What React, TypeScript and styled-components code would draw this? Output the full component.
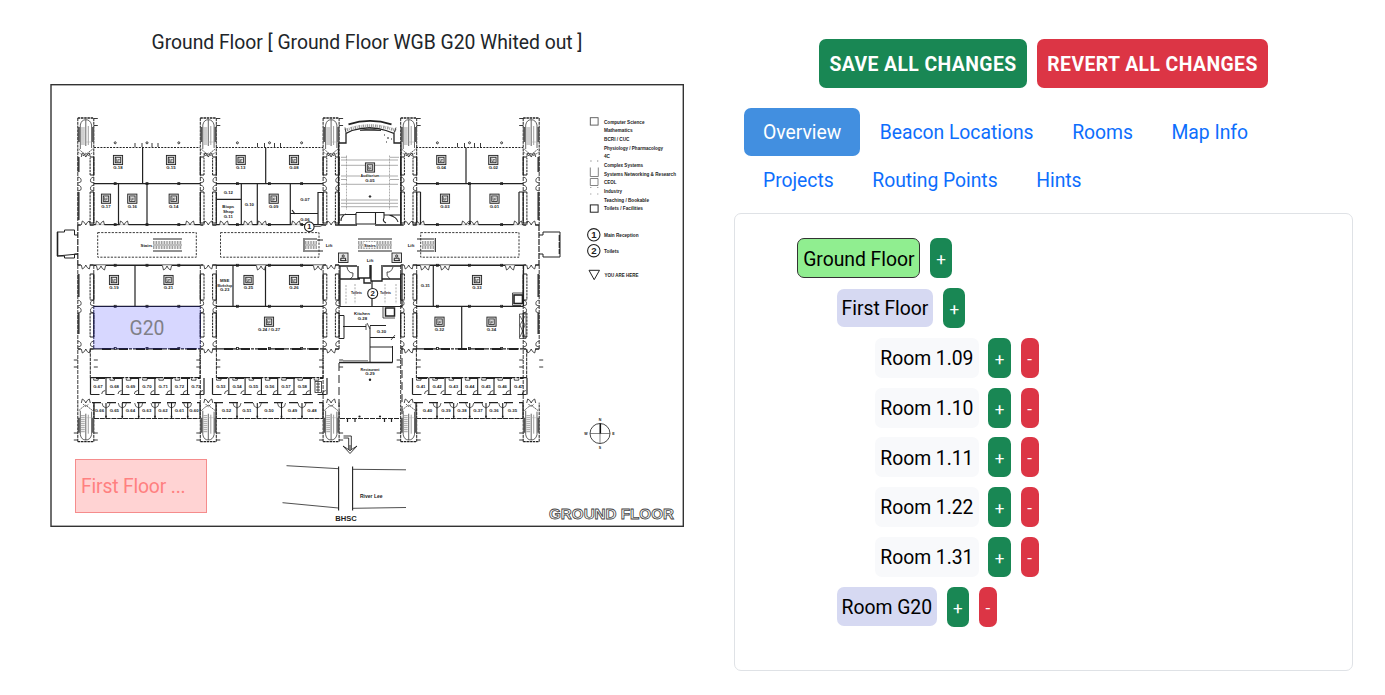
import React, { useState } from 'react';
import styled, { createGlobalStyle, css } from 'styled-components';

const GlobalStyle = createGlobalStyle`
  * { box-sizing: border-box; }
  body {
    margin: 0;
    background: #fff;
    color: #212529;
    font-family: Roboto, "Liberation Sans", sans-serif;
    font-size: 19.35px;
    line-height: 29px;
    letter-spacing: -0.032px;
  }
  button { letter-spacing: inherit; }
`;

const Page = styled.div`
  display: grid;
  grid-template-columns: 734px 619px;
  height: 695px;
  overflow: hidden;
`;

const MapColumn = styled.section`
  display: flex;
  flex-direction: column;
  align-items: center;
  padding-top: 28px;
`;

const MapTitle = styled.h1`
  margin: 0 0 27px;
  font-size: inherit;
  font-weight: 400;
  line-height: 29px;
`;

const MapFrame = styled.div`
  position: relative;
  width: 634px;
  height: 443px;
`;

const Plan = styled.svg`
  display: block;
  width: 634px;
  height: 443px;
  letter-spacing: 0;
`;

const Zone = styled.div<{ $kind: 'room' | 'floor' }>`
  position: absolute;
  display: flex;
  align-items: center;
  ${(p) =>
    p.$kind === 'room'
      ? css`
          left: 43px;
          top: 222px;
          width: 108px;
          height: 43px;
          padding-top: 2px;
          justify-content: center;
          background: rgba(0, 0, 255, 0.155);
          color: #808088;
        `
      : css`
          left: 25px;
          top: 375px;
          width: 132px;
          height: 54px;
          padding-left: 5px;
          background: #ffd3d3;
          border: 1px solid #f58c8c;
          color: #ff8080;
          letter-spacing: -0.18px;
        `}
`;

const SidePanel = styled.aside`
  display: flex;
  flex-direction: column;
  padding-top: 38.5px;
`;

const Actions = styled.div`
  display: flex;
  justify-content: center;
  gap: 10px;
`;

const ActionButton = styled.button<{ $tone: string; $width: number }>`
  width: ${(p) => p.$width}px;
  height: 49.5px;
  padding: 2px 0 0;
  border: 0;
  border-radius: 7px;
  background: ${(p) => p.$tone};
  color: #fff;
  font: 700 19.35px/29px Roboto, sans-serif;
  letter-spacing: 0.43px;
  white-space: nowrap;
`;

const Tabs = styled.nav`
  display: flex;
  flex-wrap: wrap;
  margin: 19.5px 0 0 9.7px;
`;

const Tab = styled.button<{ $active: boolean }>`
  height: 48.4px;
  padding: 1.5px 19.3px 0;
  border: 0;
  border-radius: 7px;
  background: ${(p) => (p.$active ? '#428fe0' : 'transparent')};
  color: ${(p) => (p.$active ? '#fff' : '#0d6efd')};
  font: 400 19.35px/29px Roboto, sans-serif;
`;

const TreeCard = styled.div`
  display: flex;
  flex-direction: column;
  gap: 9.75px;
  height: 458px;
  margin-top: 8.5px;
  padding: 24.5px 0 0 62.4px;
  border: 1px solid #dfe2e6;
  border-radius: 7px;
`;

const TreeRow = styled.div<{ $depth: number }>`
  display: flex;
  align-items: center;
  gap: 9.7px;
  height: 40px;
  padding-left: ${(p) => p.$depth * 38.8}px;
`;

const nodeLook = {
  root: css`
    height: 40px;
    padding: 1.5px 4.8px 0;
    border: 1px solid #333;
    background: #90ee90;
  `,
  group: css`
    height: 38.7px;
    padding: 1.5px 5px 0;
    margin-left: 0.4px;
    background: #d6d9f2;
  `,
  leaf: css`
    height: 40px;
    padding: 1.5px 5.3px 0;
    background: #f8f9fb;
  `,
};

const Node = styled.button<{ $look: keyof typeof nodeLook }>`
  border: 0;
  border-radius: 7px;
  color: #000;
  font: 400 19.35px/29px Roboto, sans-serif;
  white-space: nowrap;
  ${(p) => nodeLook[p.$look]}
`;

const SmallButton = styled.button<{ $remove?: boolean }>`
  width: ${(p) => (p.$remove ? 18 : 22.4)}px;
  height: 40px;
  padding: 2px 0 0;
  border: 0;
  border-radius: 7px;
  background: ${(p) => (p.$remove ? '#dc3545' : '#198754')};
  color: #fff;
  font: 400 17px/26px Roboto, sans-serif;
`;

const SMALL = { fontFamily: '"Liberation Sans", sans-serif', fontWeight: 700, fill: '#222', stroke: 'none' };

type LabelProps = { x: number; y: number; children: string; size?: number; anchor?: 'start' | 'middle'; len?: number };
const Label = ({ x, y, children, size = 4.3, anchor = 'middle', len }: LabelProps) => (
  <text
    {...SMALL}
    x={x}
    y={y}
    fontSize={size}
    textAnchor={anchor}
    textLength={len}
    lengthAdjust="spacingAndGlyphs"
  >
    {children}
  </text>
);

/** Projector-style room marker with the room number under it. */
const Marker = ({ x, y, label, dy = 9.4 }: { x: number; y: number; label?: string; dy?: number }) => (
  <g>
    <rect x={x - 4.6} y={y - 4.6} width={9.2} height={9.2} fill="#d5d5d5" stroke="#222" strokeWidth={0.9} />
    <rect x={x - 2.7} y={y - 2.7} width={5.4} height={5.4} fill="#eee" stroke="#222" strokeWidth={0.8} />
    <path d={`M${x - 1.5} ${y - 1.5}v3h1.3v-2h2M${x} ${y + 1}h1.5`} fill="none" stroke="#333" strokeWidth={0.6} />
    {label && <Label x={x} y={y + dy}>{label}</Label>}
  </g>
);

/** Pair of swinging doors in a horizontal wall; flip -1 opens upward. */
const Doors = ({ x, y, flip = 1 }: { x: number; y: number; flip?: number }) => (
  <g transform={`translate(${x} ${y}) scale(1 ${flip})`} stroke="#222" strokeWidth={0.8} fill="none">
    <path d="M-4.5 0H4.5" stroke="#fff" strokeWidth={1.6} />
    <path d="M-4.5 0L-3.5 4Q-1 3 0 0Q1 3 3.5 4L4.5 0" />
  </g>
);

const Tower = ({ x, y, flip = 1 }: { x: number; y: number; flip?: number }) => (
  <g transform={`translate(${x} ${y}) scale(1 ${flip})`} fill="none" stroke="#222">
    <path d="M0 0H16" strokeWidth={1.3} strokeDasharray="2.5 0.7" />
    <path d="M0 0V39M16 0V39" strokeWidth={1} strokeDasharray="3 0.8" />
    <path d="M1 9V24M15.3 9V24" strokeWidth={2} stroke="#555" />
    <path d="M2.5 31V7Q3.5 1.7 8 1.7T13.8 7V30M8 1.7V28" strokeWidth={0.7} />
    <path d="M1 31Q5 35 8 36.5L15 31M5 38L8 35L11 38" strokeWidth={0.7} strokeDasharray="2 0.6" />
    <path d="M3.2 10H7M3.2 12H7M3.2 14H7M3.2 16H7M3.2 18H7M3.2 20H7M3.2 22H7M3.2 24H7M3.2 26H7" strokeWidth={0.8} stroke="#888" />
    <path d="M10.5 8V27" strokeWidth={0.8} stroke="#888" />
    <path d="M8 24H14" stroke="#aaa" strokeWidth={0.5} />
  </g>
);

const boxes: [number, number][] = [[157, 18], [192, 31], [274, 26], [313, 24]];

const Wing = ({ x, outer }: { x: number; outer?: 'left' | 'right' }) => (
  <g fill="none" stroke="#222">
    <Tower x={x} y={118} />
    <Tower x={x} y={441.7} flip={-1} />
    {boxes.map(([y, h]) => (
      <g key={y}>
        {outer === 'left' ? (
          <path d={`M${x + 0.8} ${y}v${h - 3}`} strokeWidth={2} stroke="#444" />
        ) : (
          <g>
            <path d={`M${x} ${y}h3.7M${x} ${y + h}h3.7`} strokeWidth={1} />
            <path d={`M${x + 3.7} ${y}v${h}`} strokeWidth={1} strokeDasharray="2.4 0.8" />
            <path d={`M${x} ${y}v${h}`} strokeWidth={1.3} />
          </g>
        )}
        {outer === 'right' ? (
          <path d={`M${x + 15.2} ${y}v${h - 3}`} strokeWidth={2} stroke="#444" />
        ) : (
          <g>
            <path d={`M${x + 12.3} ${y}h3.7M${x + 12.3} ${y + h}h3.7`} strokeWidth={1} />
            <path d={`M${x + 12.3} ${y}v${h}`} strokeWidth={1} strokeDasharray="2.4 0.8" />
            <path d={`M${x + 16} ${y}v${h}`} strokeWidth={1.3} />
          </g>
        )}
      </g>
    ))}
    <path
      d={`M${x} 157V225M${x + 16} 157V225M${x} 265V403M${x + 16} 265V349`}
      strokeWidth={0.9}
      strokeDasharray="4 1"
    />
    {[177, 185, 300, 307, 341].map((y) => (
      <path key={y} d={`M${x + 16} ${y}q-4.5 1 -3 5l3 1M${x} ${y}q4.5 1 3 5l-3 1`} strokeWidth={0.75} />
    ))}
    <path d={`M${x} 152L${x + 8} 157L${x + 16} 152`} strokeWidth={0.6} strokeDasharray="2 1" />
    <Doors x={x + 8} y={157} flip={-1} />
    <Doors x={x + 8} y={225} flip={-1} />
    <Doors x={x + 8} y={265} />
    <Doors x={x + 8} y={349} />
    <Doors x={x + 8} y={403} flip={-1} />
    <path d={`M${x} 225h3M${x + 12} 225h4M${x} 265h3M${x + 12} 265h4M${x} 349h3M${x + 12} 349h4`} strokeWidth={1.3} />
    {[118.5, 125.5, 360, 367, 433, 440].map((y) => (
      <path
        key={y}
        d={outer === 'right' ? `M${x - 4} ${y}h4M${x + 16} ${y}h${y > 350 && y < 400 ? 4 : 0}` : `M${x + 16} ${y}h4M${x - 4} ${y}h${y > 350 ? 4 : 0}`}
        strokeWidth={0.9}
      />
    ))}
  </g>
);

type BlockProps = { x1: number; x2: number; top: number[]; mid?: number; doors: number[]; lowL: number; lowR: number };
const Block = ({ x1, x2, top, mid, doors, lowL, lowR }: BlockProps) => (
  <g fill="none" stroke="#222" strokeWidth={1}>
    <path d={`M${x1} 147.5H${x2}`} strokeDasharray="2 1.2" strokeWidth={1.2} />
    <path d={`M${x1} 183.6H${x2}M${x1} 306.3H${x2}`} strokeWidth={1.2} />
    <path d={`M${x1} 224.6H${x2}M${x1} 265.3H${x2}`} strokeWidth={1.4} />
    <path d={`M${x1} 348.8H${x2}M${lowL} 377.7H${lowR}`} strokeWidth={1.2} strokeDasharray="8 1 3 1" />
    <path d={`M${x1 + 8} 349H${x2 - 4}M${x1 + 2} 378H${x2}`} strokeWidth={1.8} strokeDasharray="9 8" />
    <path d={`M${lowL} 349V378M${lowR} 349V378`} strokeWidth={1} strokeDasharray="3.5 0.8" />
    <path d={`M${x1 - 3.5} 378V394.5M${x2 + 4} 378V394.5M${x1} 403V418.5M${x2} 403V418.5`} strokeWidth={1.2} />
    <path d={`M${x1 - 3.5} 394.5H${x2 + 4}M${x1 - 2} 402.7H${x2}`} strokeWidth={1.2} strokeDasharray="9 6" />
    <path d={`M${x1} 418.5H${x2}`} strokeWidth={1} strokeDasharray="5 0.8" />
    {top.map((d) => <path key={d} d={`M${d} 147.5V183.6`} strokeWidth={1.2} />)}
    {[0.2, 0.5, 0.8].map((f) => {
      const cx = x1 + (x2 - x1) * f;
      return (
        <g key={f}>
          <circle cx={cx} cy={142.8} r={1} strokeWidth={0.9} />
          {[183.6, 224.6, 265.3, 306.3, 348.5].map((y) => <rect key={y} x={cx - 1} y={y - 1} width={2} height={2} strokeWidth={0.8} />)}
        </g>
      );
    })}
    {[-12, -5, 5, 11].map((d) => <path key={d} d={`M${(mid ?? (x1 + x2) / 2) + d} 143v4`} strokeWidth={0.9} />)}
    {doors.map((d) => <Doors key={d} x={d} y={225} flip={-1} />)}
  </g>
);

type OfficesProps = { start: number; upper: string[]; lowerWalls: number[]; lower: [string, number][] };
const Offices = ({ start, upper, lowerWalls, lower }: OfficesProps) => (
  <g fill="none" stroke="#222" strokeWidth={1.1}>
    {upper.map((t, i) => {
      const x = start + i * 16.3;
      return (
        <g key={t || i}>
          {i > 0 && <path d={`M${x} 378V394`} />}
          <path d={`M${x + 12} 394q0 -3 3.5 -3.5M${x + 4} 378.5v1.7h4.5v-1.7`} strokeWidth={0.8} />
          {t && <Label x={x + 8.3} y={387.6}>{t}</Label>}
        </g>
      );
    })}
    {lowerWalls.map((x) => (
      <g key={x}>
        <path d={`M${x} 403V418.5`} />
        <path d={`M${x} 408q-4 -1 -4 -5M${x} 408q4 -1 4 -5`} strokeWidth={0.7} />
        <circle cx={x} cy={416.5} r={0.9} fill="#222" stroke="none" />
      </g>
    ))}
    {lower.map(([t, x]) => <Label key={t} x={x} y={412}>{t}</Label>)}
  </g>
);

const StairHatch = ({ x, y, w }: { x: number; y: number; w: number }) => (
  <g stroke="#222" fill="none">
    <path d={`M${x} ${y}h${w}M${x} ${y + 12}h${w}`} strokeWidth={1} />
    <path d={`M${x} ${y + 3.5}h${w}M${x} ${y + 8.5}h${w}`} strokeWidth={3.2} stroke="#888" strokeDasharray="0.8 0.8" />
    <path d={`M${x} ${y + 6}h${w}`} strokeWidth={0.6} />
  </g>
);

const NumberBadge = ({ x, y, r, children }: { x: number; y: number; r: number; children: string }) => (
  <g>
    <circle cx={x} cy={y} r={r} fill="#fff" stroke="#222" strokeWidth={1.1} />
    <Label x={x} y={y + r * 0.55} size={r * 1.55}>{children}</Label>
  </g>
);

const LiftIcon = ({ x, y }: { x: number; y: number }) => (
  <g fill="none" stroke="#222">
    <rect x={x} y={y} width={9.5} height={9.5} strokeWidth={0.9} fill="#e5e5e5" />
    <circle cx={x + 4.7} cy={y + 3} r={1.1} strokeWidth={0.9} />
    <path d={`M${x + 2.3} ${y + 8}V${y + 5.2}h4.8v2.8M${x + 2} ${y + 7.6}h6`} strokeWidth={1} />
  </g>
);

const legend: [string, number][] = [
  ['Computer Science', 40.5], ['Mathematics', 28.5], ['BCRI / CUC', 25.5], ['Physiology / Pharmacology', 59],
  ['4C', 6], ['Complex Systems', 39], ['Systems Networking & Research', 72], ['CEOL', 12.5],
  ['Industry', 18], ['Teaching / Bookable', 45], ['Toilets / Facilities', 39],
];

const Auditorium = () => (
  <g fill="none" stroke="#222">
    <path d="M338.5 225V143H346V133.5L352 130.5Q370 125 386 130.5L394 133.5V143H401V225" strokeWidth={1.3} />
    <path d="M348.5 124.3Q370 117.5 391.5 124.3" strokeWidth={1.8} />
    <path d="M345 130.5Q370 121 396 130.5" stroke="#999" strokeWidth={3} strokeDasharray="0.8 1 1.5 0.8" />
    <path d="M360 130.3Q370 127.5 381 130.5Z" fill="#777" strokeWidth={0.7} />
    <path d="M345 127.5L346 133M396 127.5L394 133" strokeWidth={0.8} />
    <path d="M346.5 155.5V210M389.5 155.5V210" stroke="#777" strokeWidth={0.6} strokeDasharray="2 1" />
    {[157.3, 160, 165.3, 176, 179.5, 184.3, 200, 203.3, 206.7].map((y, i) => (
      <path key={y} d={i === 0 || i === 4 ? `M341 ${y}h6M390 ${y}h9` : `M341 ${y}H398`} stroke="#888" strokeWidth={0.7} />
    ))}
    <circle cx={370} cy={196.5} r={0.8} fill="#222" />
    <path d="M384 135h1M387 138h2M386 142h1M391 139h1" />
    <path d="M339 215L346 214.5H356M356 212.5H384V215H401M356 213V224M375.5 213V224M356 224H375M384 215V218Q382 221 386 223M346 214Q341 216 341 221M389 215Q397 217 398 222" strokeWidth={1.1} />
    <path d="M339 225H357M375 225H401" strokeWidth={1.5} />
    <rect x={360} y={173.5} width={20} height={9} fill="#fff" stroke="none" />
    <Marker x={370} y={167.5} />
    <Label x={370} y={177.3} len={19}>Auditorium</Label>
    <Label x={370} y={182}>G.05</Label>
  </g>
);

const CentreCore = () => (
  <g fill="none" stroke="#222" strokeWidth={1}>
    <StairHatch x={358} y={239} w={34} />
    <rect x={363.5} y={242} width={12.5} height={5.6} fill="#fff" stroke="none" />
    <Label x={370} y={246.8}>Stairs</Label>
    <Label x={370} y={261.5}>Lift</Label>
    <LiftIcon x={338.5} y={253} />
    <LiftIcon x={392} y={253} />
    <path d="M339 266H357M383 266H401M358 266V278H370V265M371 265V281H382V265M364 278V283H371M340 279H360M382 279H401" strokeWidth={1.4} />
    <path d="M340 266V306.5H402V266M372 281V306" strokeWidth={1.2} />
    <path d="M347 267Q348 273 353 273Q354 277 350 279M393 267Q391 273 387 272Q386 276 390 279" strokeWidth={0.8} />
    <path d="M346 285V304M355 284V304M385 284V304M396 284V304" stroke="#777" strokeWidth={0.6} strokeDasharray="2 1.3" />
    <Label x={356.5} y={293.8} len={11}>Toilets</Label>
    <Label x={385.5} y={293.8} len={11}>Toilets</Label>
    <NumberBadge x={372.7} y={293.5} r={5}>2</NumberBadge>
    <path d="M339 315.5H344V338.5H339M343 326.5H366M370 326V362.5M370 325.5H386M370 337.5H395M392.5 346V362.5M370 347H393" />
    <path d="M339 362.5H392.5" strokeWidth={1.7} />
    <path d="M343 360.8H368" strokeWidth={0.7} />
    <rect x={385.5} y={308} width={9} height={8} strokeWidth={1.5} />
    <path d="M383 307V318H395M367 323L370 329M366 324v6M391 340l4 -5" strokeWidth={0.8} />
    <Label x={362} y={315}>Kitchen</Label>
    <Label x={362.5} y={319.5}>G.28</Label>
    <Label x={381.5} y={332.8}>G.30</Label>
    <path d="M339 363V418M402 346V418" strokeDasharray="8 4" />
    <path d="M340 418.5H401" strokeDasharray="5 1" />
    <path d="M347.5 419v3M355 419v3M384.5 419v3M391.5 419v3" strokeWidth={1.2} />
    <circle cx={370} cy={379.7} r={1.2} fill="#222" stroke="none" />
    <circle cx={359.5} cy={416.5} r={1.1} fill="#222" stroke="none" />
    <circle cx={380} cy={416.5} r={1.1} fill="#222" stroke="none" />
    <Label x={370} y={370.5} len={19}>Restaurant</Label>
    <Label x={370} y={375}>G.29</Label>
  </g>
);

const FloorPlan = () => (
  <Plan viewBox="50 84 634 443" role="img" aria-label="Ground floor plan">
    <rect x={51} y={84.7} width={632.3} height={441.6} fill="#fff" stroke="#333" strokeWidth={1.4} />

    <Block x1={94} x2={200} lowL={90.3} lowR={200} top={[142.6]} doors={[100, 124, 190]} />
    <Block x1={216} x2={323} lowL={216.4} lowR={323} top={[265.7]} doors={[224, 248, 262, 296]} />
    <Block x1={416} x2={523} lowL={416.4} lowR={526.7} top={[466]} doors={[420, 466, 474, 518]} />

    <g fill="none" stroke="#222" strokeWidth={1.2}>
      <path d="M118.5 183.6V224.6M147 183.6V224.6M135 265.3V306" />
      <path d="M241.3 184V224.6M257.3 184V224.6M290.3 184V224.6M216 199.3H241M290.3 213.5H318M318 224V192.5H323M292 210l3 4" />
      <path d="M233 265.3V306M265.5 265.3V306" />
      <path d="M470 183.6V224.6M420.5 192V224M416 192h4.5M519 192V224M519 192h4M433.3 265.3V306M461.7 306.3V349M523.5 265V306" />
      <path d="M519.5 314H526V338.5H519.5ZM520 316L525 325L520 337M525 316L520 325L525 337" strokeWidth={0.7} />
      <rect x={514} y={295} width={8.5} height={8.5} strokeWidth={1.6} />
      <path d="M524 293H512.5V305.5H521" strokeWidth={0.8} />
      <path d="M57 232H64.5V230H74.5V235H78M78 254H74.5V258H64.5V256H57Z" strokeWidth={1} />
      <path d="M57.5 232V256" strokeWidth={1.6} />
      <path d="M539 235H543V232H560V257H543V254H539" strokeWidth={1} />
      <path d="M559.3 235V254M77.8 225V265M539 225V265" strokeWidth={1.2} strokeDasharray="6 1" />
      <g strokeWidth={0.9} strokeDasharray="2.2 1.3">
        <rect x={97.7} y={232.6} width={98.6} height={24.6} />
        <rect x={220.5} y={232.6} width={98.5} height={24.6} />
        <rect x={420.7} y={232.6} width={98.3} height={24.6} />
      </g>
    </g>
    <StairHatch x={153} y={239} w={29} />
    <Label x={146.5} y={246.8}>Stairs</Label>
    <StairHatch x={305} y={239} w={12} />
    <StairHatch x={422} y={239} w={12} />
    <path d="M304 238v14M317 240h6M317 251h6M435.3 238v14M417 239h5M417 251h5" stroke="#222" strokeWidth={1.1} />
    <Label x={329} y={247}>Lift</Label>
    <Label x={411} y={247}>Lift</Label>

    <Wing x={77.8} outer="left" />
    <Wing x={200.3} />
    <Wing x={323.1} />
    <Wing x={400.7} />
    <Wing x={523.2} outer="right" />
    {[101, 167, 261, 318].map((x) => <Doors key={x} x={x} y={266} />)}
    {[425, 445, 510].map((x) => <Doors key={x} x={x} y={266} />)}

    <Marker x={118} y={160} label="G.18" />
    <Marker x={171} y={160} label="G.15" />
    <Marker x={106} y={198.7} label="G.17" />
    <Marker x={132.3} y={198.7} label="G.16" />
    <Marker x={173.7} y={198.7} label="G.14" />
    <Marker x={240.7} y={160} label="G.13" />
    <Marker x={294} y={160} label="G.08" />
    <Marker x={273.7} y={198.7} label="G.09" />
    <Label x={228.3} y={194.3}>G.12</Label>
    <Label x={228.3} y={208}>Biops</Label>
    <Label x={228.3} y={212.8}>Shop</Label>
    <Label x={228.3} y={217.6}>G.11</Label>
    <Label x={249.3} y={206}>G.10</Label>
    <Label x={305} y={200.5}>G.07</Label>
    <Label x={305} y={221.3}>G.06</Label>
    <Marker x={441.3} y={160} label="G.04" />
    <Marker x={493.3} y={160} label="G.02" />
    <Marker x={445} y={198.7} label="G.03" />
    <Marker x={494.5} y={198.7} label="G.01" />
    <Marker x={114} y={280} label="G.19" />
    <Marker x={168.5} y={280} label="G.21" />
    <Label x={224.7} y={282.3}>MSE</Label>
    <Label x={224.7} y={286.8} len={15}>Workshop</Label>
    <Label x={224.7} y={291.3}>G.23</Label>
    <Marker x={248.5} y={280} label="G.25" />
    <Marker x={294} y={280} label="G.26" />
    <Marker x={269} y={321.7} label="G.24 / G.27" />
    <Label x={425.3} y={286.8}>G.31</Label>
    <Marker x={477} y={280} label="G.33" />
    <Marker x={439.5} y={321.7} label="G.32" />
    <Marker x={491.5} y={321.7} label="G.34" />

    <Auditorium />
    <CentreCore />

    <Offices
      start={89.7}
      upper={['G.67', 'G.68', 'G.69', 'G.70', 'G.71', 'G.72', 'G.73']}
      lowerWalls={[106, 122.3, 138.7, 155, 171.5, 187.7]}
      lower={[['G.66', 99.5], ['G.65', 114.3], ['G.64', 130.5], ['G.63', 146.7], ['G.62', 163], ['G.61', 179.5], ['G.60', 194]]}
    />
    <Offices
      start={212.5}
      upper={['G.53', 'G.54', 'G.55', 'G.56', 'G.57', 'G.58', '']}
      lowerWalls={[237, 257.3, 281.5, 302]}
      lower={[['G.52', 226.5], ['G.51', 246.8], ['G.50', 269], ['G.49', 292.5], ['G.48', 312]]}
    />
    <g fill="none" stroke="#222" strokeWidth={0.8}>
      <rect x={315} y={381.5} width={6.5} height={11} />
      <path d="M316 384h4M316 387h4M316 390h4M318 382v10" />
    </g>
    <Offices
      start={412.5}
      upper={['G.41', 'G.42', 'G.43', 'G.44', 'G.45', 'G.46', 'G.47']}
      lowerWalls={[437, 453.7, 469.7, 486, 502.7]}
      lower={[['G.40', 427.5], ['G.39', 446], ['G.38', 462], ['G.37', 478], ['G.36', 494], ['G.35', 512.5]]}
    />

    <NumberBadge x={309.3} y={226.7} r={4.8}>1</NumberBadge>
    <path d="M314 226.5h6l3 -1.5" fill="none" stroke="#222" strokeWidth={0.7} />

    <g fill="none" stroke="#222" strokeWidth={0.9}>
      <rect x={590.3} y={117.7} width={7.8} height={7.4} stroke="#555" />
      <path d="M590.3 161h1.3M597 161h1.3M590.3 167.5v9H598.3v-9M590.3 178.5V185.5H598V178.5ZM590.3 187.5h1M597.3 187.5h1M590.3 194h1M597.3 194h1" stroke="#666" strokeWidth={0.8} />
      <rect x={590.3} y={204.9} width={7.8} height={7.3} strokeWidth={1} />
      <path d="M589 270.3H599.5L594.2 279.7Z" strokeWidth={1} />
    </g>
    {legend.map(([t, len], i) => (
      <Label key={t} x={604} y={123.5 + i * 8.68} size={4.8} anchor="start" len={len}>{t}</Label>
    ))}
    <NumberBadge x={593.8} y={234.8} r={6.2}>1</NumberBadge>
    <NumberBadge x={593.8} y={250.7} r={6.2}>2</NumberBadge>
    <Label x={604} y={236.6} size={4.8} anchor="start" len={34.5}>Main Reception</Label>
    <Label x={604} y={252.6} size={4.8} anchor="start" len={15}>Toilets</Label>
    <Label x={604.5} y={277.2} size={4.8} anchor="start" len={34}>YOU ARE HERE</Label>

    <g fill="none" stroke="#333">
      <circle cx={600} cy={433.5} r={10} strokeWidth={0.9} />
      <path d="M590 433.5H610M600 433.5V443.5" strokeWidth={0.6} />
      <path d="M600.3 423.5V433.5" strokeWidth={1.6} stroke="#111" />
    </g>
    <Label x={600} y={421} size={3.6}>N</Label>
    <Label x={600} y={448.5} size={3.6}>S</Label>
    <Label x={586} y={434.8} size={3.6}>W</Label>
    <Label x={613.5} y={434.8} size={3.6}>E</Label>

    <g fill="none" stroke="#222" strokeWidth={0.9}>
      <path d="M343.5 436H351.3V449M343.5 438H348.7V449" />
      <path d="M343 446L350 453.5L357 446M350 451V445M343 446L350 450.5L357 446" />
      <path d="M286.5 465.7L338.5 468.7M353 469.3L406 469.8M282.5 502.7L338.5 508M353 508.3L406 507.5" strokeWidth={0.8} />
      <path d="M338.6 466.5V510.5M352.6 466.5V510.5" strokeWidth={1.1} />
    </g>
    <Label x={360} y={498} size={5} anchor="start" len={22.5}>River Lee</Label>
    <Label x={346} y={521} size={7} len={21.5}>BHSC</Label>
    <text
      x={549} y={518.7} fontFamily='"Liberation Sans", sans-serif' fontWeight={700} fontSize={14.6}
      textLength={125} lengthAdjust="spacingAndGlyphs" fill="#fff" stroke="#444" strokeWidth={0.8}
    >
      GROUND FLOOR
    </text>
  </Plan>
);

type TreeItem = { name: string; depth: number; look: keyof typeof nodeLook; removable: boolean };
const tree: TreeItem[] = [
  { name: 'Ground Floor', depth: 0, look: 'root', removable: false },
  { name: 'First Floor', depth: 1, look: 'group', removable: false },
  ...['1.09', '1.10', '1.11', '1.22', '1.31'].map(
    (n): TreeItem => ({ name: `Room ${n}`, depth: 2, look: 'leaf', removable: true }),
  ),
  { name: 'Room G20', depth: 1, look: 'group', removable: true },
];

const tabs = ['Overview', 'Beacon Locations', 'Rooms', 'Map Info', 'Projects', 'Routing Points', 'Hints'];

export default function App() {
  const [active, setActive] = useState('Overview');
  return (
    <Page>
      <GlobalStyle />
      <MapColumn>
        <MapTitle>Ground Floor [ Ground Floor WGB G20 Whited out ]</MapTitle>
        <MapFrame>
          <FloorPlan />
          <Zone $kind="room">G20</Zone>
          <Zone $kind="floor">First Floor ...</Zone>
        </MapFrame>
      </MapColumn>
      <SidePanel>
        <Actions>
          <ActionButton $tone="#198754" $width={208}>SAVE ALL CHANGES</ActionButton>
          <ActionButton $tone="#dc3545" $width={231}>REVERT ALL CHANGES</ActionButton>
        </Actions>
        <Tabs>
          {tabs.map((t) => (
            <Tab key={t} $active={t === active} onClick={() => setActive(t)}>{t}</Tab>
          ))}
        </Tabs>
        <TreeCard>
          {tree.map((item) => (
            <TreeRow key={item.name} $depth={item.depth}>
              <Node $look={item.look}>{item.name}</Node>
              <SmallButton>+</SmallButton>
              {item.removable && <SmallButton $remove>-</SmallButton>}
            </TreeRow>
          ))}
        </TreeCard>
      </SidePanel>
    </Page>
  );
}
